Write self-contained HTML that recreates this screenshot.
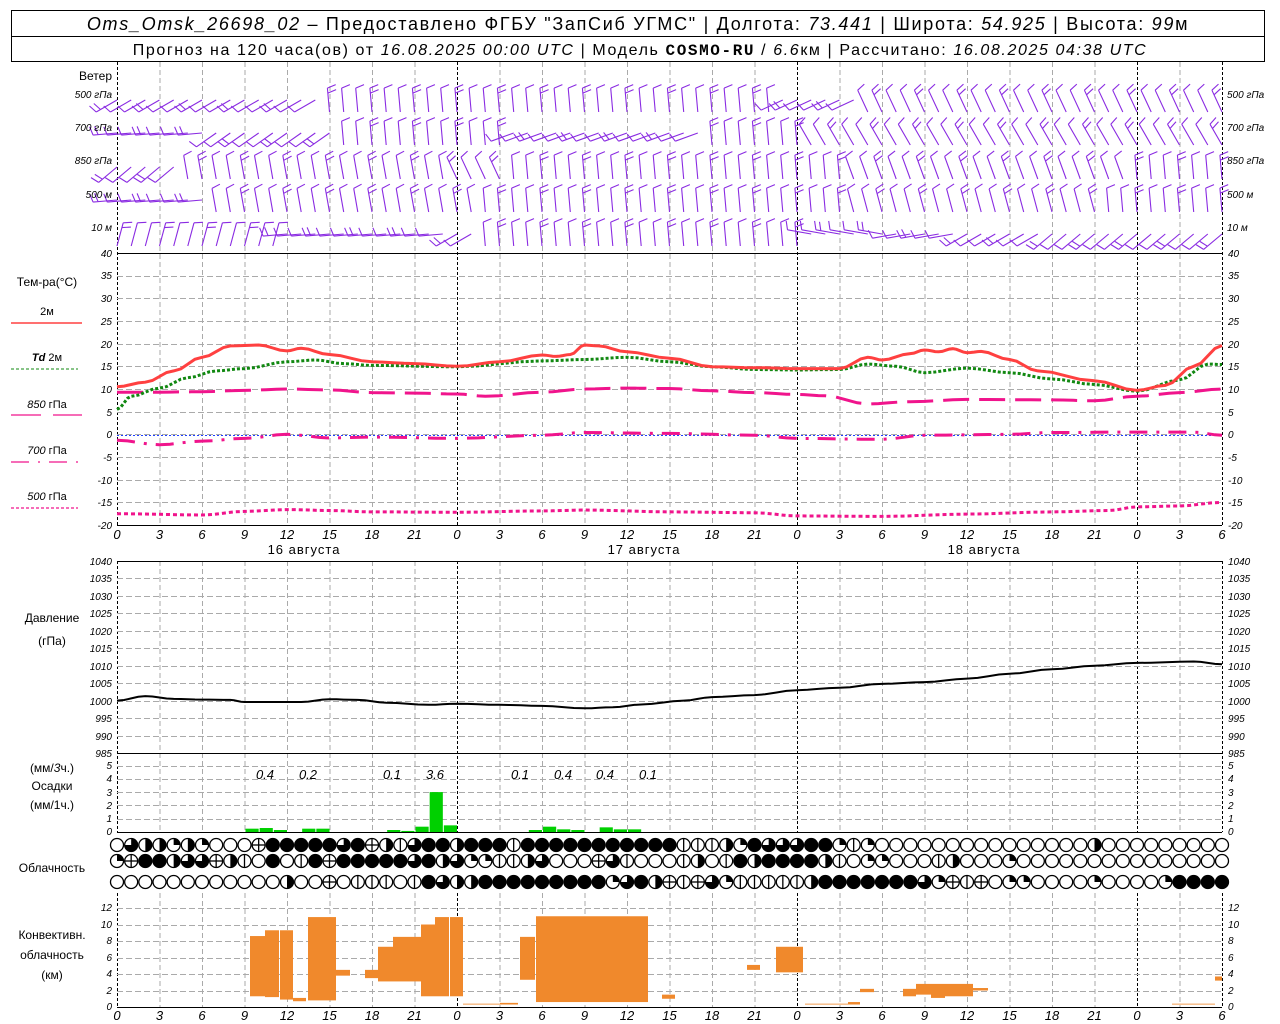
<!DOCTYPE html>
<html><head><meta charset="utf-8">
<style>
html,body{margin:0;padding:0;background:#fff;}
svg{display:block;}
text{font-family:"Liberation Sans","DejaVu Sans",sans-serif;fill:#000;}
.ax{font-size:10px;font-style:italic;}
.lb{font-size:12px;}
</style></head><body>
<svg id="s" width="1280" height="1024" viewBox="0 0 1280 1024" xmlns="http://www.w3.org/2000/svg">
<rect x="11.5" y="10.5" width="1253" height="51" fill="none" stroke="#000"/>
<line x1="11" y1="36.5" x2="1265" y2="36.5" stroke="#000"/>
<text x="638" y="30" text-anchor="middle" style="font-size:18px;letter-spacing:1.7px"><tspan font-style="italic">Oms_Omsk_26698_02</tspan> – Предоставлено ФГБУ "ЗапСиб УГМС" | Долгота: <tspan font-style="italic">73.441</tspan> | Широта: <tspan font-style="italic">54.925</tspan> | Высота: <tspan font-style="italic">99</tspan>м</text>
<text x="640" y="55" text-anchor="middle" style="font-size:16px;letter-spacing:1.6px">Прогноз на 120 часа(ов) от <tspan font-style="italic">16.08.2025 00:00 UTC</tspan>  | Модель <tspan font-family="Liberation Mono" font-weight="bold">COSMO-RU</tspan> / <tspan font-style="italic">6.6</tspan>км | Рассчитано: <tspan font-style="italic">16.08.2025 04:38 UTC</tspan></text>

<g id="grid"></g>
<g id="data"></g>

<text x="112" y="80" text-anchor="end" class="lb">Ветер</text>
<g class="ax">
<text x="112" y="98" text-anchor="end">500 гПа</text><text x="112" y="131" text-anchor="end">700 гПа</text><text x="112" y="164" text-anchor="end">850 гПа</text><text x="112" y="198" text-anchor="end">500 м</text><text x="112" y="231" text-anchor="end">10   м</text>
<text x="1227" y="98">500 гПа</text><text x="1227" y="131">700 гПа</text><text x="1227" y="164">850 гПа</text><text x="1227" y="198">500 м</text><text x="1227" y="231">10   м</text>
</g>
<text x="47" y="286" text-anchor="middle" class="lb">Тем-ра(°C)</text>
<text x="47" y="315" text-anchor="middle" style="font-size:11px">2м</text>
<line x1="11" y1="323" x2="82" y2="323" stroke="#ff4040" stroke-width="1.5"/>
<text x="47" y="361" text-anchor="middle" style="font-size:11px"><tspan font-style="italic" font-weight="bold">Td</tspan>  2м</text>
<line x1="11" y1="369" x2="78" y2="369" stroke="#118811" stroke-dasharray="3,2"/>
<text x="47" y="408" text-anchor="middle" style="font-size:11px"><tspan font-style="italic">850</tspan> гПа</text>
<line x1="11" y1="415" x2="82" y2="415" stroke="#f0148c" stroke-dasharray="30,12" stroke-width="1.2"/>
<text x="47" y="454" text-anchor="middle" style="font-size:11px"><tspan font-style="italic">700</tspan> гПа</text>
<line x1="11" y1="462" x2="78" y2="462" stroke="#f0148c" stroke-dasharray="18,9,2,9" stroke-width="1.2"/>
<text x="47" y="500" text-anchor="middle" style="font-size:11px"><tspan font-style="italic">500</tspan> гПа</text>
<line x1="11" y1="508" x2="78" y2="508" stroke="#f0148c" stroke-dasharray="3,2" stroke-width="1.2"/>

<text x="52" y="622" text-anchor="middle" class="lb">Давление</text>
<text x="52" y="645" text-anchor="middle" class="lb">(гПа)</text>
<text x="52" y="772" text-anchor="middle" class="lb">(мм/<tspan font-style="italic">3</tspan>ч.)</text>
<text x="52" y="790" text-anchor="middle" class="lb">Осадки</text>
<text x="52" y="809" text-anchor="middle" class="lb">(мм/1ч.)</text>
<text x="52" y="872" text-anchor="middle" class="lb">Облачность</text>
<text x="52" y="939" text-anchor="middle" class="lb">Конвективн.</text>
<text x="52" y="959" text-anchor="middle" class="lb">облачность</text>
<text x="52" y="979" text-anchor="middle" class="lb">(км)</text>

<g style="font-size:13px;font-style:italic" text-anchor="middle">
<text x="265" y="779">0.4</text><text x="308" y="779">0.2</text><text x="392" y="779">0.1</text><text x="435" y="779">3.6</text>
<text x="520" y="779">0.1</text><text x="563" y="779">0.4</text><text x="605" y="779">0.4</text><text x="648" y="779">0.1</text>
</g>
<g style="font-size:13px;letter-spacing:1px" text-anchor="middle">
<text x="304" y="554">16 августа</text><text x="644" y="554">17 августа</text><text x="984" y="554">18 августа</text>
</g>
<g id="ax1" style="font-size:13px;font-style:italic" text-anchor="middle">
<text x="117" y="539">0</text><text x="159.5" y="539">3</text><text x="202" y="539">6</text><text x="244.5" y="539">9</text><text x="287" y="539">12</text><text x="329.5" y="539">15</text><text x="372" y="539">18</text><text x="414.5" y="539">21</text><text x="457" y="539">0</text><text x="499.5" y="539">3</text><text x="542" y="539">6</text><text x="584.5" y="539">9</text><text x="627" y="539">12</text><text x="669.5" y="539">15</text><text x="712" y="539">18</text><text x="754.5" y="539">21</text><text x="797" y="539">0</text><text x="839.5" y="539">3</text><text x="882" y="539">6</text><text x="924.5" y="539">9</text><text x="967" y="539">12</text><text x="1009.5" y="539">15</text><text x="1052" y="539">18</text><text x="1094.5" y="539">21</text><text x="1137" y="539">0</text><text x="1179.5" y="539">3</text><text x="1222" y="539">6</text>
</g>
<g style="font-size:13px;font-style:italic" text-anchor="middle">
<text x="117" y="1020">0</text><text x="159.5" y="1020">3</text><text x="202" y="1020">6</text><text x="244.5" y="1020">9</text><text x="287" y="1020">12</text><text x="329.5" y="1020">15</text><text x="372" y="1020">18</text><text x="414.5" y="1020">21</text><text x="457" y="1020">0</text><text x="499.5" y="1020">3</text><text x="542" y="1020">6</text><text x="584.5" y="1020">9</text><text x="627" y="1020">12</text><text x="669.5" y="1020">15</text><text x="712" y="1020">18</text><text x="754.5" y="1020">21</text><text x="797" y="1020">0</text><text x="839.5" y="1020">3</text><text x="882" y="1020">6</text><text x="924.5" y="1020">9</text><text x="967" y="1020">12</text><text x="1009.5" y="1020">15</text><text x="1052" y="1020">18</text><text x="1094.5" y="1020">21</text><text x="1137" y="1020">0</text><text x="1179.5" y="1020">3</text><text x="1222" y="1020">6</text>
</g>
<g class="ax" text-anchor="end">
<text x="112" y="257">40</text><text x="112" y="302">30</text><text x="112" y="279">35</text><text x="112" y="325">25</text><text x="112" y="348">20</text><text x="112" y="370">15</text><text x="112" y="393">10</text><text x="112" y="416">5</text><text x="112" y="438">0</text><text x="112" y="461">-5</text><text x="112" y="484">-10</text><text x="112" y="506">-15</text><text x="112" y="529">-20</text>
<text x="112" y="565">1040</text><text x="112" y="582">1035</text><text x="112" y="600">1030</text><text x="112" y="617">1025</text><text x="112" y="635">1020</text><text x="112" y="652">1015</text><text x="112" y="670">1010</text><text x="112" y="687">1005</text><text x="112" y="705">1000</text><text x="112" y="722">995</text><text x="112" y="740">990</text><text x="112" y="757">985</text>
<text x="112" y="769">5</text><text x="112" y="782">4</text><text x="112" y="796">3</text><text x="112" y="809">2</text><text x="112" y="822">1</text><text x="112" y="835">0</text>
<text x="112" y="911">12</text><text x="112" y="928">10</text><text x="112" y="944">8</text><text x="112" y="961">6</text><text x="112" y="977">4</text><text x="112" y="994">2</text><text x="112" y="1010">0</text>
</g>
<g class="ax">
<text x="1228" y="257">40</text><text x="1228" y="302">30</text><text x="1228" y="279">35</text><text x="1228" y="325">25</text><text x="1228" y="348">20</text><text x="1228" y="370">15</text><text x="1228" y="393">10</text><text x="1228" y="416">5</text><text x="1228" y="438">0</text><text x="1228" y="461">-5</text><text x="1228" y="484">-10</text><text x="1228" y="506">-15</text><text x="1228" y="529">-20</text>
<text x="1228" y="565">1040</text><text x="1228" y="582">1035</text><text x="1228" y="600">1030</text><text x="1228" y="617">1025</text><text x="1228" y="635">1020</text><text x="1228" y="652">1015</text><text x="1228" y="670">1010</text><text x="1228" y="687">1005</text><text x="1228" y="705">1000</text><text x="1228" y="722">995</text><text x="1228" y="740">990</text><text x="1228" y="757">985</text>
<text x="1228" y="769">5</text><text x="1228" y="782">4</text><text x="1228" y="796">3</text><text x="1228" y="809">2</text><text x="1228" y="822">1</text><text x="1228" y="835">0</text>
<text x="1228" y="911">12</text><text x="1228" y="928">10</text><text x="1228" y="944">8</text><text x="1228" y="961">6</text><text x="1228" y="977">4</text><text x="1228" y="994">2</text><text x="1228" y="1010">0</text>
</g>
</svg>
<script>
var NS="http://www.w3.org/2000/svg";
var G=document.getElementById("grid"),D=document.getElementById("data");
function el(p,t,a){var e=document.createElementNS(NS,t);for(var k in a)e.setAttribute(k,a[k]);p.appendChild(e);return e;}
var X0=117,PH=(1222-117)/78;
function X(h){return X0+h*PH;}
var segs=[[62,525],[561,832],[893,1007]];
for(var h=0;h<=78;h+=3){segs.forEach(function(s){
 var day=(h%24==0)||h==78;
 el(G,"line",{x1:X(h)+.5,y1:s[0],x2:X(h)+.5,y2:s[1],stroke:day?"#000":"#aaa","stroke-dasharray":day?"3,2":"5,3"});});}
function hg(y){el(G,"line",{x1:117,y1:y+.5,x2:1222,y2:y+.5,stroke:"#aaa","stroke-dasharray":"6,3"});}
function TY(t){return 253+(40-t)*272/60;}
for(var t=35;t>-20;t-=5)hg(Math.round(TY(t)));
function PY(p){return 561+(1040-p)*192/55;}
for(var p=1035;p>985;p-=5)hg(Math.round(PY(p)));
function RY(r){return 832-r*13.3;}
for(var r=1;r<=5;r++)hg(Math.round(RY(r)));
function KY(k){return 1007-k*8.25;}
for(var k=2;k<=12;k+=2)hg(Math.round(KY(k)));
[253,525,561,753,832,1007].forEach(function(y){el(G,"line",{x1:117,y1:y+.5,x2:1222,y2:y+.5,stroke:"#000"});});
el(G,"line",{x1:117,y1:435.5,x2:1222,y2:435.5,stroke:"#2040ff","stroke-dasharray":"2,2"});
function curve(pts,f,att){var d="";pts.forEach(function(q,i){d+=(i?"L":"M")+X(q[0]).toFixed(1)+","+f(q[1]).toFixed(1);});att.d=d;att.fill="none";el(D,"path",att);}
function smooth(pts){var o=[];for(var i=0;i<pts.length-1;i++){var a=pts[i],b=pts[i+1];for(var s=0;s<4;s++){var u=s/4,w=(1-Math.cos(u*Math.PI))/2;o.push([a[0]+(b[0]-a[0])*u,a[1]+(b[1]-a[1])*w]);}}o.push(pts[pts.length-1]);return o;}
curve(smooth([[0,-17.5],[6,-17.8],[9,-17],[12,-16.6],[15,-16.8],[18,-17.1],[24,-17.2],[30,-16.9],[33,-16.7],[39,-17.1],[45,-17.3],[48,-18],[54,-18.1],[60,-17.6],[66,-17.1],[70,-16.8],[72,-16],[75,-15.8],[78,-15]]),TY,{stroke:"#f0148c","stroke-width":3,"stroke-dasharray":"4,3"});
curve(smooth([[0,-1.3],[3,-2.3],[6,-1.5],[9,-0.9],[12,0],[15,-0.8],[18,-0.6],[24,-0.9],[30,-0.2],[33,0.4],[39,0.2],[45,-0.2],[48,-0.9],[54,-1.1],[57,-0.2],[63,0],[66,0.4],[72,0.5],[76,0.5],[78,-0.2]]),TY,{stroke:"#f0148c","stroke-width":3,"stroke-dasharray":"18,9,3,9"});
curve(smooth([[0,9.3],[3,9.3],[6,9.4],[9,9.7],[12,10],[15,9.8],[18,9.2],[21,9.1],[24,8.9],[26,8.4],[30,9.3],[33,10],[36,10.2],[39,10.1],[42,9.6],[45,9.2],[48,8.8],[50,8.5],[53,6.7],[56,7.2],[60,7.7],[66,7.6],[69,7.4],[72,8.4],[75,9.2],[78,10]]),TY,{stroke:"#f0148c","stroke-width":3,"stroke-dasharray":"26,10"});
curve(smooth([[0,5.5],[1,8.4],[3,10.2],[5,12.5],[7,14],[9,14.5],[12,16],[14,16.4],[16,15.6],[18,15.2],[24,14.9],[30,16.2],[33,16.5],[36,17],[39,16],[42,14.9],[45,14.3],[48,14.2],[51,14.3],[53,15.5],[55,15],[57,13.6],[60,14.6],[63,13.6],[66,12.2],[69,11],[72,9.5],[75,12],[77,15.5],[78,15.4]]),TY,{stroke:"#118811","stroke-width":3,"stroke-dasharray":"3,2"});
curve(smooth([[0,10.5],[2,11.5],[4,14],[6,17],[8,19.5],[10,19.7],[12,18.4],[13,19],[15,17.6],[18,16],[21,15.6],[24,15],[27,16],[30,17.5],[31,17.2],[32,17.6],[33,19.7],[34,19.5],[36,18.2],[39,16.8],[42,14.9],[45,14.7],[48,14.5],[51,14.5],[53,17],[54,16.4],[56,17.8],[57,18.6],[58,18.2],[59,18.9],[60,18],[61,18.3],[63,16.5],[65,14],[69,11.8],[72,9.7],[74,10.8],[76,15],[78,19.6]]),TY,{stroke:"#ff4040","stroke-width":3});
curve(smooth([[0,1000],[2,1001.3],[4,1000.5],[6,1000.3],[8,1000.2],[9,999.6],[13,999.6],[15,1000.4],[17,1000.2],[19,999.4],[22,998.8],[24,999.1],[27,998.8],[30,998.5],[33,997.8],[35,998.1],[37,998.9],[40,1000],[42,1001],[45,1001.6],[48,1003],[51,1003.7],[54,1004.8],[57,1005.3],[60,1006.3],[63,1007.7],[66,1009],[69,1010],[72,1010.8],[76,1011.2],[78,1010.4]]),PY,{stroke:"#000","stroke-width":2});
[[9,.25],[10,.3],[11,.15],[13,.25],[14,.25],[19,.15],[20,.08],[21,.4],[22,3],[23,.5],[29,.15],[30,.4],[31,.2],[32,.15],[34,.35],[35,.2],[36,.2]].forEach(function(b){
 el(D,"rect",{x:X(b[0])+1,y:RY(b[1]),width:PH-1,height:b[1]*13.3,fill:"#00d000"});});
[[250,265,1.3,8.6],[265,279,1.2,9.3],[280,293,.9,9.3],[293,306,.7,1.1],[308,336,.8,10.9],[336,350,3.8,4.5],[365,378,3.5,4.5],[378,393,3.1,7.3],[393,421,3.1,8.5],[421,435,1.3,10],[435,449,1.3,10.9],[450,463,1.3,10.9],[463,500,.3,.4],[500,518,.3,.5],[520,535,3.3,8.5],[536,648,.6,11],[662,675,1,1.5],[747,760,4.5,5.1],[776,803,4.2,7.3],[805,848,.3,.4],[848,860,.3,.6],[860,874,1.8,2.2],[903,916,1.3,2.2],[916,931,1.5,2.8],[931,945,1.1,2.8],[945,973,1.3,2.8],[973,988,2,2.3],[1172,1215,.3,.4],[1215,1222,3.2,3.7]].forEach(function(b){
 el(D,"rect",{x:b[0],y:KY(b[3]),width:b[1]-b[0],height:(b[3]-b[2])*8.25,fill:"#f0892c"});});
function pad(s){s=s.replace(/ /g,"");while(s.length<79)s+="0";return s.slice(0,79);}
var rows=[pad("0322q2q000h4444434h2134424441444444444441112q43"+"3344q1q"+"000000000000000200000"),
 pad("qh4423 3h2104014h44444342 3qq11230 00h3100012014 24444210qq00012000q00000000000000002"),
 pad("000000000000200h0111014 322444444444q342h1h3q1111124444444 3qh1h0qq0000q0000q4444000")];
var cy=[845,861,882],R=6.5;
rows.forEach(function(s,ri){for(var i=0;i<79;i++){var x=X(i),y=cy[ri],c=s[i];
 el(D,"circle",{cx:x,cy:y,r:R,fill:c=="4"?"#000":"#fff",stroke:"#000","stroke-width":1.3});
 if(c=="2")el(D,"path",{d:"M"+x+","+(y-R)+"A"+R+","+R+" 0 0 1 "+x+","+(y+R)+"Z",fill:"#000"});
 if(c=="q")el(D,"path",{d:"M"+x+","+y+"L"+x+","+(y-R)+"A"+R+","+R+" 0 0 1 "+(x+R)+","+y+"Z",fill:"#000"});
 if(c=="3")el(D,"path",{d:"M"+x+","+y+"L"+x+","+(y-R)+"A"+R+","+R+" 0 1 1 "+(x-R)+","+y+"Z",fill:"#000"});
 if(c=="1")el(D,"line",{x1:x,y1:y-R,x2:x,y2:y+R,stroke:"#000","stroke-width":1.3});
 if(c=="h"){el(D,"line",{x1:x,y1:y-R,x2:x,y2:y+R,stroke:"#000","stroke-width":1.3});el(D,"line",{x1:x-R,y1:y,x2:x+R,y2:y,stroke:"#000","stroke-width":1.3});}
}});
var levels=[[96,function(h){return h<15?-120:h<47?-5:h<53?-115:-25;}],
 [129,function(h){return h<7?-95:h<16?-125:h<28?-5:h<42?-110:h<49?-5:-30;}],
 [163,function(h){return h<5?-130:h<24?-10:h<28?-25:h<52?-5:h<62?-20:h<72?-20:-5;}],
 [196,function(h){return h<7?-95:h<26?-10:h<52?-5:h<70?-15:-5;}],
 [230,function(h){return h<12?15:h<24?-95:h<26?-120:h<49?-5:h<55?-80:h<60?-100:h<66?-120:-130;}]];
levels.forEach(function(L,li){for(var h=0;h<=78;h++){
 var a=L[1](h)*Math.PI/180,len=24;
 var bx=X(h),by=L[0]+(Math.abs(L[1](h))<60?16:4);
 var tx=bx+len*Math.sin(a),ty=by-len*Math.cos(a);
 var d="M"+bx.toFixed(1)+","+by.toFixed(1)+"L"+tx.toFixed(1)+","+ty.toFixed(1);
 var n=1+((h*7+li*3)%3==0?1:0);
 for(var j=0;j<n;j++){var px=bx+(len-j*5)*Math.sin(a),py=by-(len-j*5)*Math.cos(a);
  var b=a+Math.PI*0.4;d+="M"+px.toFixed(1)+","+py.toFixed(1)+"l"+(9*Math.sin(b)).toFixed(1)+","+(-9*Math.cos(b)).toFixed(1);}
 el(D,"path",{d:d,stroke:"#8a2be2",fill:"none","stroke-width":1.1});
}});
</script>
</body></html>
